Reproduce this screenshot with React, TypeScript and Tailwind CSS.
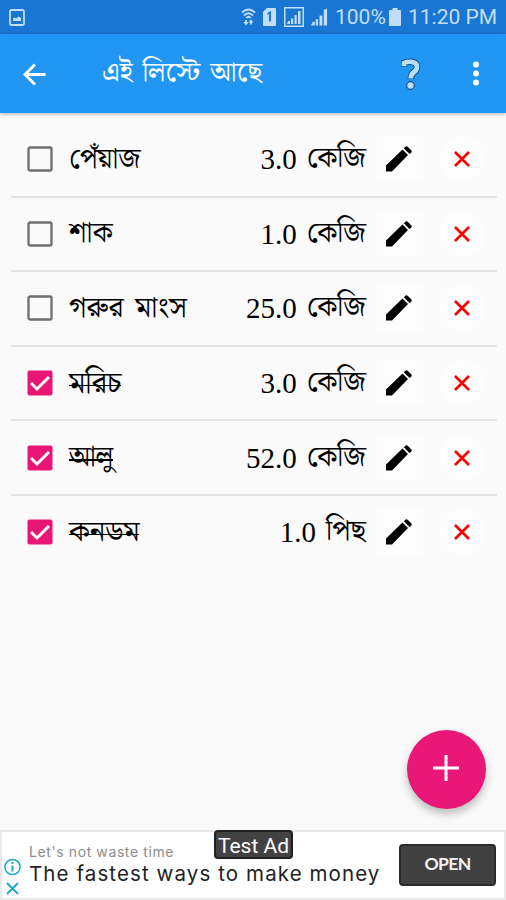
import React from "react";

type Item = { name: string; nameSize: string; qty: string; unit: string; unitStyle: string; done: boolean };

const items: Item[] = [
  { name: "পেঁয়াজ", nameSize: "text-[28px]", qty: "3.0", unit: "কেজি", unitStyle: "text-[28.5px]", done: false },
  { name: "শাক", nameSize: "text-[28.5px]", qty: "1.0", unit: "কেজি", unitStyle: "text-[28.5px]", done: false },
  { name: "গরুর মাংস", nameSize: "text-[29.5px] [word-spacing:4px]", qty: "25.0", unit: "কেজি", unitStyle: "text-[28.5px]", done: false },
  { name: "মরিচ", nameSize: "text-[30px]", qty: "3.0", unit: "কেজি", unitStyle: "text-[28.5px]", done: true },
  { name: "আলু", nameSize: "text-[28px]", qty: "52.0", unit: "কেজি", unitStyle: "text-[28.5px]", done: true },
  { name: "কনডম", nameSize: "text-[29.5px]", qty: "1.0", unit: "পিছ", unitStyle: "text-[29px]", done: true },
];

const bangla = "font-['Noto_Serif_Bengali','Noto_Sans_Bengali','Liberation_Serif',serif]";

function StatusBar() {
  return (
    <div className="flex h-[34px] shrink-0 items-center bg-[#1976d2] pl-[9px] pr-[9px] text-[#c3defa]">
      <svg width="16" height="17" viewBox="0 0 16 17" fill="none">
        <rect x="1" y="1" width="14" height="15" rx="1.5" stroke="currentColor" strokeWidth="1.8" />
        <path d="M4 12V9.5l1.5-1 1.5 1L9.500 7.500 12 9v3z" fill="currentColor" />
      </svg>
      <div className="ml-auto flex items-center">
        <svg width="15" height="18" viewBox="0 0 15 18" fill="none" stroke="currentColor" strokeWidth="1.8">
          <path d="M1 4.500Q7.500-1.500 14 4.500M3 7.500Q7.500 3 12 7.500M5.300 10Q7.500 7.500 9.700 10" />
          <path d="M5 12v4M10 16.500v-4" />
          <path d="M2.500 14 5 17.500 7.500 14zM7.500 14.500l2.500-3 2.500 3z" fill="currentColor" stroke="none" />
        </svg>
        <svg className="ml-[7px]" width="13" height="18" viewBox="0 0 13 18">
          <path d="M4 0h8q1 0 1 1v16q0 1-1 1H1q-1 0-1-1V4z" fill="currentColor" />
          <path d="M4.500 6 7 4.500v9" stroke="#1976d2" strokeWidth="2" fill="none" />
        </svg>
        <svg className="ml-[8px]" width="20" height="20" viewBox="0 0 20 20" fill="currentColor">
          <rect x=".75" y=".75" width="18.500" height="18.500" fill="none" stroke="currentColor" strokeWidth="1.500" />
          <path d="M4 14h2v3H3zM7 11.500h2.200V17H7zM10.500 8h2.200v9h-2.200zM14 4h2.500v13H14z" />
        </svg>
        <svg className="ml-[7px]" width="17" height="18" viewBox="0 0 18 18" fill="currentColor">
          <path d="M2 14h2v4H0zM5 11.500h2.500V18H5zM9 7.500h3V18H9zM13.500 1.500 17 0v18h-3.500z" />
        </svg>
        <span className="ml-[7px] w-[51px] whitespace-nowrap font-[Roboto,sans-serif] text-[21px] leading-[36px]">100%</span>
        <svg className="ml-[3px]" width="12" height="18" viewBox="0 0 12 18" fill="currentColor">
          <path d="M3.500 0h5v2H11q1 0 1 1v14q0 1-1 1H1q-1 0-1-1V3q0-1 1-1h2.500z" />
        </svg>
        <span className="ml-[7px] w-[89px] whitespace-nowrap font-[Roboto,sans-serif] text-[21px] leading-[36px]">11:20 PM</span>
      </div>
    </div>
  );
}

function AppBar() {
  return (
    <header className="relative z-10 flex h-[79px] shrink-0 items-center bg-[#2196f3] pb-[1px] text-white shadow-[0_1px_4px_rgba(0,0,0,.3)]">
      <svg className="ml-[23px] mt-[2px]" width="23" height="23" viewBox="0 0 24 23" fill="none" stroke="white" strokeWidth="3">
        <path d="M12.500 1 2 11.500l10.500 10.500M2 11.500h21.500" />
      </svg>
      <h1 className={`ml-[56px] w-[260px] whitespace-nowrap text-[27.5px] leading-[40px] [word-spacing:3px] ${bangla}`}>এই লিস্টে আছে</h1>
      <svg className="ml-[39px] mt-[2px]" width="20" height="33" viewBox="0 0 20 33">
        <path d="M2.500 8.500V5Q6 3.500 10 3.800 16 4.200 16 9 16 12 12.500 14.500 9.800 16.500 9.800 21" fill="none" stroke="#174f80" strokeWidth="6.500" />
        <path d="M3 8V5Q6 3.500 10 3.800 16 4.200 16 9 16 12 12.500 14.500 9.800 16.500 9.800 20.500" fill="none" stroke="#bbdefb" strokeWidth="4.700" />
        <circle cx="9.500" cy="27.500" r="3.800" fill="#bbdefb" stroke="#174f80" strokeWidth="1.200" />
      </svg>
      <svg className="ml-auto mr-[26px] mt-[1px]" width="8" height="25" viewBox="0 0 8 25" fill="white">
        <circle cx="4" cy="3.500" r="3" /><circle cx="4" cy="12.500" r="3" /><circle cx="4" cy="21.500" r="3" />
      </svg>
    </header>
  );
}

function Check({ on }: { on: boolean }) {
  return (
    <svg width="26" height="26" viewBox="0 0 26 26" fill="none">
      {on ? (
        <>
          <rect x=".5" y=".5" width="25" height="25" rx="2" fill="#e91675" />
          <path d="m4 13 6 6L22 7" stroke="white" strokeWidth="3" />
        </>
      ) : (
        <rect x="1.500" y="1.500" width="23" height="23" rx="1.500" stroke="#6e6e6e" strokeWidth="2.300" />
      )}
    </svg>
  );
}

function Row({ item }: { item: Item }) {
  return (
    <li className="box-border flex h-[74.600px] items-center border-b-2 border-[#e3e3e3] last:border-transparent">
      <div className="ml-[16px]"><Check on={item.done} /></div>
      <span className={`relative ml-[16px] mt-[1px] whitespace-nowrap leading-[40px] text-black ${item.nameSize} ${bangla}`}>
        {item.name}
        {item.done && <span className="absolute left-0 right-0 top-[21px] h-[1.5px] bg-black" />}
      </span>
      <div className="ml-auto flex items-center whitespace-nowrap text-black">
        <span className="font-['Liberation_Serif',serif] text-[29px] leading-[40px]">{item.qty}</span>
        <span className={`ml-[10px] leading-[40px] ${item.unitStyle} ${bangla}`}>{item.unit}</span>
      </div>
      <div className="ml-[11px] flex h-[46px] w-[46px] items-center justify-center bg-[#fcfcfc] pr-[2px]">
        <svg width="26" height="26" viewBox="0 0 26 26"><path d="M0 25.500v-6L16.500 3.500l5.500 5.500L6 25.500zM17.800 2.300 19.300.8q1.200-1 2.400 0l3.500 3.500q1 1.200 0 2.400L23.500 8z" /></svg>
      </div>
      <div className="ml-[16px] mr-[12px] flex h-[46px] w-[46px] items-center justify-center rounded-full bg-[#fcfcfc]">
        <svg width="16" height="16" viewBox="0 0 16 16" fill="none" stroke="#f80000" strokeWidth="2.600"><path d="m1 1 14 14M15 1 1 15" /></svg>
      </div>
    </li>
  );
}

function Ad() {
  return (
    <footer className="relative flex h-[70px] shrink-0 border-2 border-[#e9e9e9] bg-white">
      <div className="ml-[2px] mt-[26px] flex w-[17px] flex-col items-center gap-[6px]">
        <svg width="17" height="18" viewBox="0 0 17 18" fill="none" stroke="#20a9c7" strokeWidth="1.500"><circle cx="8.500" cy="9" r="7.600" /><path d="M8.500 7.500v6M8.500 4v2" strokeWidth="2" /></svg>
        <svg width="13" height="13" viewBox="0 0 13 13" fill="none" stroke="#20a9c7" strokeWidth="2"><path d="m1 1 11 11M12 1 1 12" /></svg>
      </div>
      <div className="ml-[8px] flex w-[353px] flex-col whitespace-nowrap font-[Inter,sans-serif]">
        <span className="mt-[10px] text-[14px] leading-[20px] tracking-[.6px] text-[#8c8c8c]">Let's not waste time</span>
        <span className="text-[20.5px] leading-[24px] tracking-[1.1px] text-[#222]">The fastest ways to make money</span>
      </div>
      <button className="ml-auto mr-[8px] mt-[12px] h-[42px] w-[97px] rounded-[4px] border-2 border-[#2b2b2b] bg-[#414141] pb-[3px] font-[Lato,sans-serif] text-[17.5px] font-bold leading-[34px] tracking-[-.6px] text-[#f4f4f4]">OPEN</button>
      <div className="absolute left-[212px] top-[-2px] flex h-[29px] w-[79px] items-center justify-center whitespace-nowrap rounded-[4px] border-2 border-[#202020] bg-[#424242] pt-[3px] font-[Roboto,sans-serif] text-[21px] leading-[25px] text-white">Test Ad</div>
    </footer>
  );
}

export default function App() {
  return (
    <div className="relative flex h-[900px] w-[506px] flex-col overflow-hidden bg-[#fafafa]">
      <StatusBar />
      <AppBar />
      <ul className="ml-[11px] mr-[9px] mt-[10px] flex-1">
        {items.map((item) => <Row key={item.name} item={item} />)}
      </ul>
      <button aria-label="+" className="absolute left-[407px] top-[730px] flex h-[79px] w-[79px] items-center justify-center rounded-full bg-[#e91878] pb-[3px] pr-[2px] shadow-[0_5px_9px_rgba(0,0,0,.25)]">
        <svg width="26" height="26" viewBox="0 0 26 26" fill="none" stroke="white" strokeWidth="3"><path d="M13 0v26M0 13h26" /></svg>
      </button>
      <Ad />
    </div>
  );
}
